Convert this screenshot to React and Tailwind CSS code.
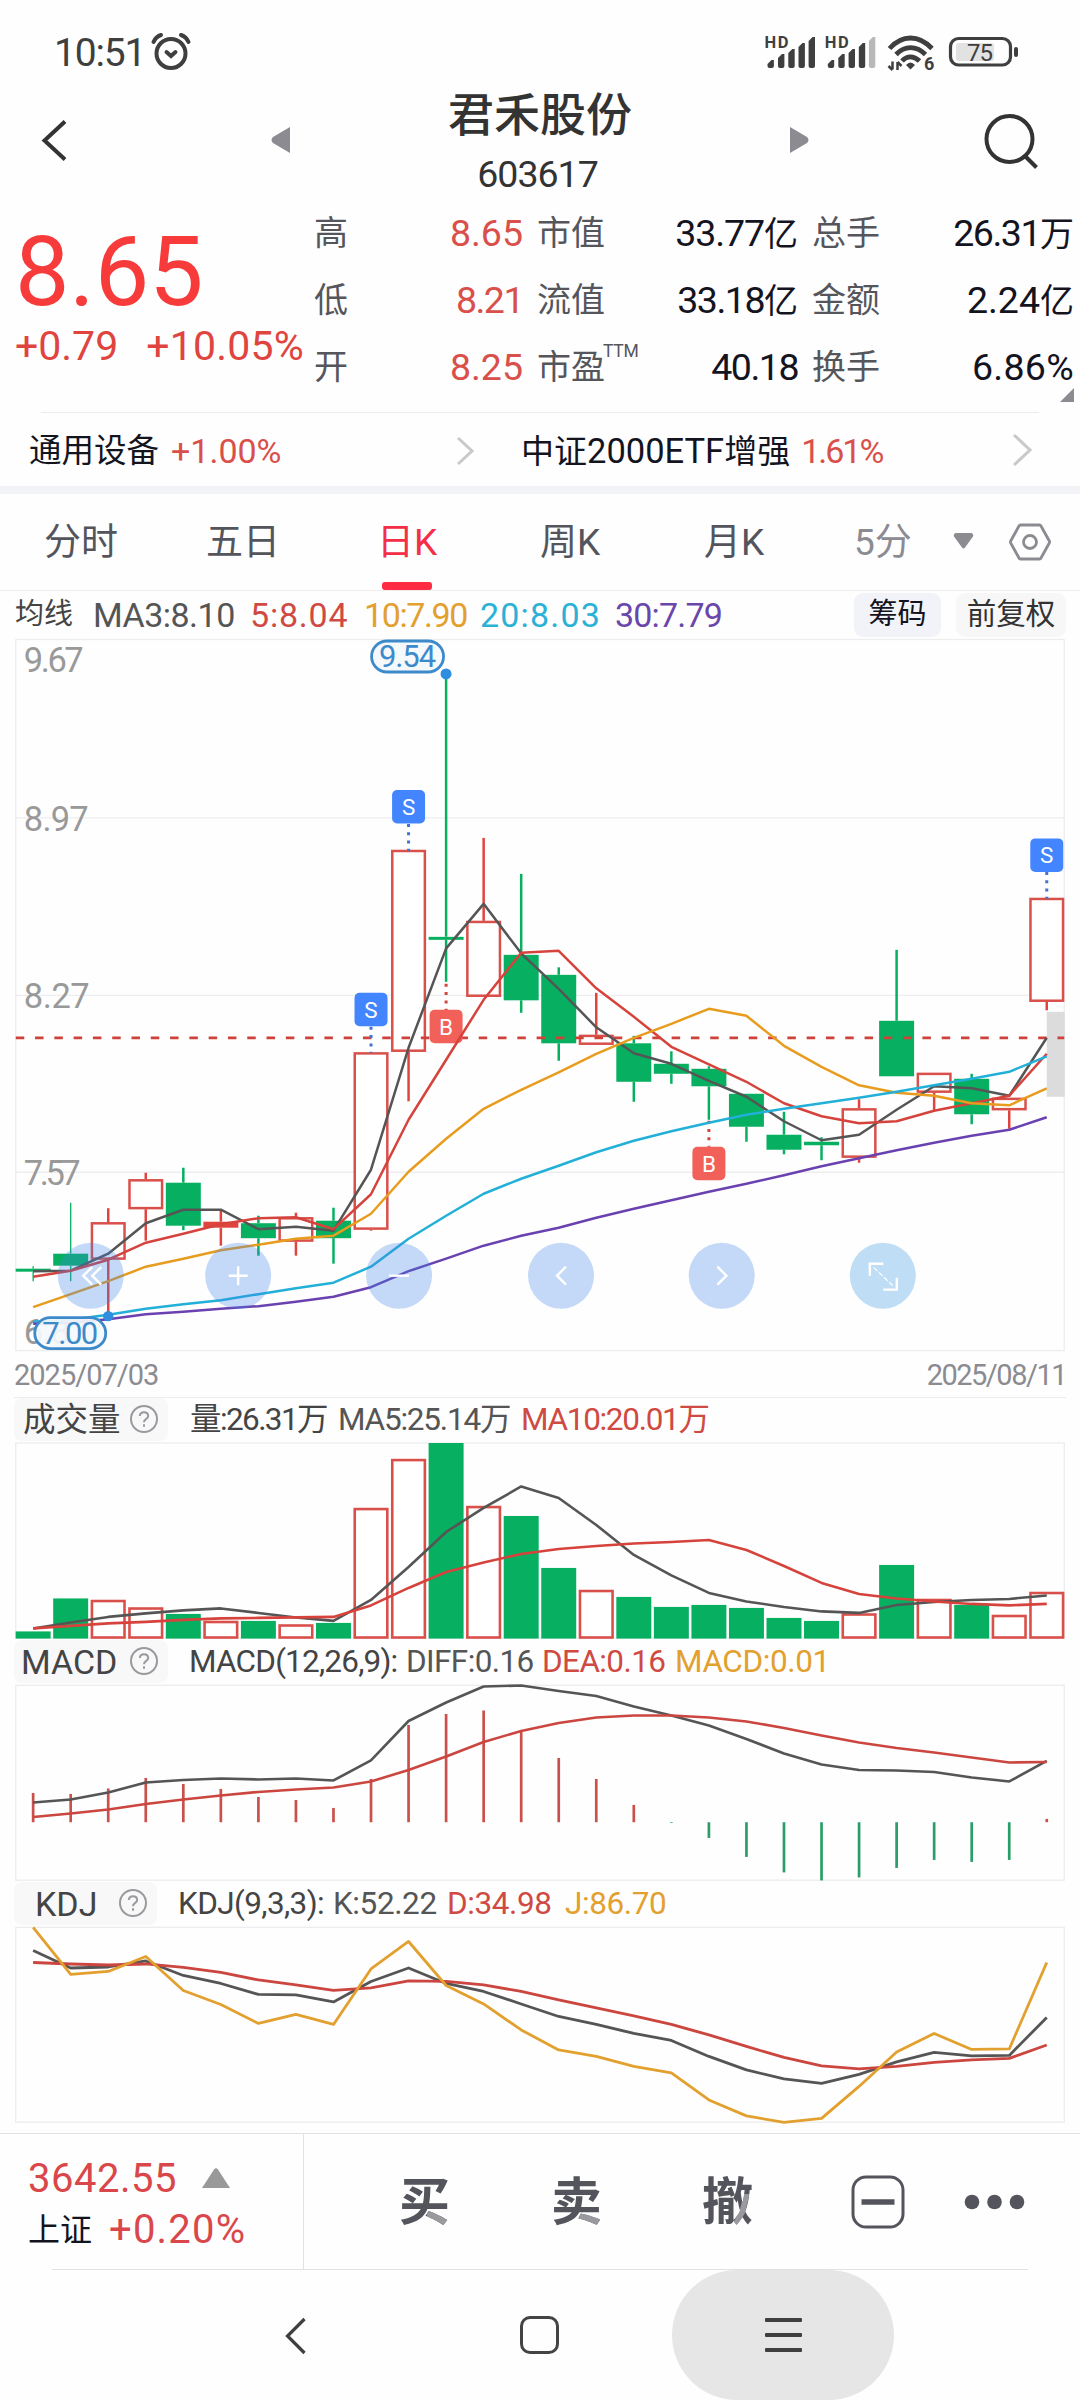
import React from "react";

const RED = "#e0443e";
const LINE_RED = "#d5433c";
const GREEN = "#07b061";
const GRAY = "#555555";
const ORANGE = "#e89c1e";
const CYAN = "#22b0d8";
const PURPLE = "#6a41b0";

const X0 = 32.9;
const STEP = 37.56;
const cx = (i) => X0 + i * STEP;
const toPoints = (ys) => ys.map((y, i) => `${cx(i).toFixed(1)},${y}`).join(" ");

// type, body top, body bottom, high, low
const candles = [
  ["g", 1269, 1272, 1266.5, 1281.5],
  ["g", 1254, 1266, 1203, 1281.5],
  ["r", 1222.5, 1260, 1208.5, 1315],
  ["r", 1179.5, 1209.5, 1173, 1241],
  ["g", 1183, 1226, 1168, 1230.5],
  ["f", 1222, 1228, 1211, 1246],
  ["g", 1223.5, 1238.5, 1216, 1256],
  ["r", 1217.5, 1242, 1213, 1256],
  ["g", 1221, 1238.5, 1208, 1264],
  ["r", 1052.5, 1230, 1052.5, 1231],
  ["r", 850, 1052, 850, 1101.5],
  ["g", 937, 940, 674, 982],
  ["r", 921, 997, 838, 997],
  ["g", 955, 1000.5, 874, 1013],
  ["g", 975, 1043.5, 967.5, 1061],
  ["r", 1035, 1045, 993, 1045],
  ["g", 1043.5, 1082, 1036, 1102],
  ["g", 1064, 1074, 1051.5, 1084],
  ["g", 1069, 1086.5, 1066.5, 1120],
  ["g", 1094, 1127, 1094, 1142],
  ["g", 1135, 1150, 1112, 1154.5],
  ["g", 1142, 1145.5, 1137.5, 1160.5],
  ["r", 1108.5, 1158, 1099.5, 1163],
  ["g", 1021, 1076.5, 950, 1076.5],
  ["r", 1073, 1093, 1073, 1111],
  ["g", 1079, 1114.5, 1074, 1124.5],
  ["r", 1098, 1110.5, 1098, 1129],
  ["r", 898, 1002, 898, 1010.5],
];

const ma3 = [1271.5, 1271, 1254, 1223.5, 1210, 1210, 1229.5, 1227, 1231, 1170, 1048, 948.5, 904, 953.5, 989, 1027.5, 1053.5, 1064, 1081, 1097, 1121.5, 1140.5, 1135, 1110, 1086.5, 1088.5, 1096, 1038];
const ma5 = [1277, 1271, 1260, 1243, 1234, 1224.5, 1218.5, 1217.5, 1229.5, 1194.5, 1120, 1060, 1000, 953, 951, 988.5, 1017, 1047, 1064.5, 1082, 1103.5, 1116.5, 1123.5, 1121.5, 1111, 1103.5, 1096, 1054];
const ma10 = [1307.5, 1294.5, 1281.5, 1267, 1259, 1250.5, 1245, 1239, 1236, 1214, 1172, 1139, 1109, 1090, 1072.5, 1054, 1038, 1024, 1009, 1016, 1046, 1067, 1085.5, 1093, 1096, 1103.5, 1105.5, 1088.5];
const ma20 = [1322, 1320, 1315, 1309, 1304.5, 1300.5, 1294.5, 1288.5, 1283, 1267, 1239, 1216, 1194, 1179, 1166, 1152.5, 1141, 1131.5, 1123, 1115, 1109, 1103.5, 1098, 1092, 1085.5, 1079, 1072, 1056.5];
const ma30 = [1324, 1323, 1319.5, 1314.5, 1312, 1309, 1306.5, 1302, 1297, 1287.5, 1271.5, 1259, 1246, 1236, 1228, 1218, 1209, 1200.5, 1192, 1184, 1175.5, 1166.5, 1158.5, 1150.5, 1143, 1136, 1130, 1117.5];

const volumes = [1631.5, 1598.5, 1600, 1607.5, 1614, 1621, 1621, 1624.5, 1623, 1508, 1459, 1443, 1506, 1516, 1568, 1590, 1597, 1607, 1605, 1608, 1618, 1621, 1613.5, 1565, 1599, 1605, 1615, 1592];
const vol5 = [1628.5, 1622.5, 1617, 1613.5, 1610.5, 1608.5, 1613, 1617.5, 1621, 1600, 1567, 1532, 1508, 1486.5, 1498, 1525, 1555, 1575.5, 1593, 1601.5, 1607, 1611.5, 1613, 1605, 1602, 1600, 1599, 1595.5];
const vol10 = [1628.5, 1626, 1623.5, 1622, 1620, 1618.5, 1618, 1617.5, 1617, 1605.5, 1588, 1572, 1562.5, 1554, 1549, 1546, 1543.5, 1542, 1540, 1550, 1566, 1583, 1594, 1598.5, 1601.5, 1604, 1605.5, 1604];

const macdBars = [1793, 1794, 1788.5, 1778, 1784, 1789, 1797, 1800, 1808, 1779, 1725, 1714, 1710.5, 1731, 1758, 1779, 1805, 1823, 1838, 1857, 1872.5, 1880.5, 1877.5, 1868, 1860, 1862, 1860, 1819];
const diff = [1802.5, 1799.5, 1792.5, 1782.5, 1780, 1778.5, 1779.5, 1778.5, 1780.5, 1760.5, 1721, 1702.5, 1686.5, 1685.5, 1691, 1696, 1706.5, 1715.5, 1725.5, 1739, 1753.5, 1764.5, 1770, 1770.5, 1772, 1777.5, 1781.5, 1761];
const dea = [1817, 1813.5, 1809.5, 1804, 1799.5, 1795.5, 1792, 1789.5, 1787.5, 1781.5, 1770, 1756.5, 1742, 1731, 1723, 1717.5, 1715.5, 1715.5, 1717.5, 1721.5, 1728, 1735.5, 1742.5, 1748, 1752.5, 1757.5, 1762.5, 1762];

const kLine = [1950.5, 1968, 1967, 1961, 1975.5, 1983.5, 1994.5, 1995, 2002, 1981.5, 1968, 1983.5, 1991.5, 2004, 2016.5, 2024.5, 2033.5, 2040.5, 2056.5, 2070, 2079, 2083.5, 2074.5, 2062, 2052.5, 2056, 2055.5, 2017.5];
const dLine = [1962.5, 1964, 1965, 1964, 1967.5, 1972.5, 1980, 1985, 1990.5, 1988, 1981, 1981.5, 1985, 1991.5, 2000, 2008, 2016, 2024.5, 2035, 2046.5, 2057.5, 2066, 2069, 2066.5, 2062.5, 2060, 2058.5, 2045];
const jLine = [1927.5, 1974.5, 1971.5, 1956.5, 1990.5, 2004.5, 2023.5, 2014.5, 2024.5, 1969, 1941.5, 1985.5, 2004, 2030, 2050, 2056.5, 2066.5, 2073, 2100, 2116, 2122.5, 2118.5, 2086.5, 2052, 2033.5, 2049.5, 2049, 1962.5];

function Line({ ys, color, w = 2.5 }) {
  return <polyline points={toPoints(ys)} fill="none" stroke={color} strokeWidth={w} strokeLinejoin="round" />;
}

function Candle({ i, type, top, bottom, high, low }) {
  const x = cx(i);
  const color = type === "g" ? GREEN : RED;
  const wick = i < 2 ? 1.3 : 2.5;
  return (
    <g>
      {high < top && <line x1={x} x2={x} y1={high} y2={top} stroke={color} strokeWidth={wick} />}
      {low > bottom && <line x1={x} x2={x} y1={bottom} y2={low} stroke={color} strokeWidth={wick} />}
      {type === "r" ? (
        <rect x={x - 16.3} y={top + 1.1} width={32.6} height={bottom - top - 2.2} fill="#fff" stroke="#d9504b" strokeWidth={2.5} />
      ) : (
        <rect x={x - 17.5} y={top} width={35} height={bottom - top} fill={color} />
      )}
    </g>
  );
}

function Marker({ i, y, label, color }) {
  const x = cx(i);
  return (
    <g>
      <rect x={x - 16.5} y={y} width={33} height={33.5} rx={5} fill={color} />
      <text x={x} y={y + 25} textAnchor="middle" fontSize={22.5} fill="#fff">{label}</text>
    </g>
  );
}

function PricePill({ x, y, w, label }) {
  return (
    <g>
      <rect x={x} y={y} width={w} height={31} rx={15.5} fill="#f5f9fc" fillOpacity={0.92} stroke="#3d8acb" strokeWidth={2.8} />
      <text x={x + w / 2} y={y + 26.5} textAnchor="middle" fontSize={31} textLength={w - 15} fill="#3d8acb">{label}</text>
    </g>
  );
}

const AXIS = [
  ["9.67", 672, 60],
  ["8.97", 831, 65],
  ["8.27", 1008, 66],
  ["7.57", 1185, 57],
  ["6.87", 1344, 65],
];

const BUTTONS = [
  [90.5, "#4084e8", "M92 1267.5l-9 8.5 9 9M101 1267.5l-9 8.5 9 9"],
  [238, "#4084e8", "M228.5 1276h19M238 1266.5v19"],
  [399, "#4084e8", "M389 1276h20"],
  [561, "#4084e8", "M566 1267l-9 9 9 9"],
  [721.8, "#4084e8", "M717.5 1267l9 9-9 9"],
  [883, "#3091e1", "M870 1276v-12h13.5M897 1278v12h-13.5"],
];

function MainChart() {
  return (
    <svg className="block h-[715px] w-full" viewBox="0 638 1080 715" fontFamily="Roboto, sans-serif">
      <g stroke="#ededef" strokeWidth={1.3} fill="none">
        <rect x={15.5} y={639.5} width={1049} height={711.5} />
        <path d="M15.5 818H1064.5M15.5 995.5H1064.5M15.5 1172.5H1064.5" />
      </g>
      {AXIS.map(([t, y, w]) => (
        <text key={t} x={23.5} y={y} fontSize={34.5} textLength={w} fill="#999999">{t}</text>
      ))}
      {candles.map(([type, top, bottom, high, low], i) => (
        <Candle key={i} i={i} type={type} top={top} bottom={bottom} high={high} low={low} />
      ))}
      <rect x={1047} y={1012} width={18} height={85} fill="#dcdcdc" />
      <line x1={15.5} x2={1064.5} y1={1038} y2={1038} stroke="#d0413a" strokeWidth={2.7} strokeDasharray="8.5 10.8" />
      <g strokeWidth={3} strokeDasharray="3 5.3" fill="none">
        <path stroke="#4273d0" d={`M${cx(9)} 1027V1053M${cx(10)} 824V851M${cx(27)} 872V899`} />
        <path stroke="#d5453e" d={`M${cx(11)} 984V1011M${cx(18)} 1121V1147`} />
      </g>
      <Marker i={9} y={993} label="S" color="#4285ff" />
      <Marker i={10} y={790} label="S" color="#4285ff" />
      <Marker i={27} y={838.5} label="S" color="#4285ff" />
      <Marker i={11} y={1010} label="B" color="#f2605a" />
      <Marker i={18} y={1147} label="B" color="#f2605a" />
      <Line ys={ma3} color={GRAY} />
      <Line ys={ma5} color={LINE_RED} />
      <Line ys={ma10} color={ORANGE} />
      <Line ys={ma20} color={CYAN} />
      <Line ys={ma30} color={PURPLE} />
      <PricePill x={371.5} y={641} w={72} label="9.54" />
      <circle cx={446} cy={674} r={5.5} fill="#2f8ee0" />
      <PricePill x={34.5} y={1318} w={71} label="7.00" />
      <circle cx={108} cy={1316.5} r={5.2} fill="#2f8ee0" />
      {BUTTONS.map(([x, color, d]) => (
        <g key={x}>
          <circle cx={x} cy={1276} r={33} fill={color} fillOpacity={0.3} />
          <path d={d} fill="none" stroke="#fff" strokeWidth={2.4} />
        </g>
      ))}
      <path d="M874 1268l19 18" stroke="#fff" strokeWidth={1.2} strokeDasharray="5 2" />
    </svg>
  );
}

function VolumeChart() {
  return (
    <svg className="block h-[199px] w-full" viewBox="0 1441 1080 199">
      <rect x={15.5} y={1443} width={1049} height={195} fill="none" stroke="#ededef" strokeWidth={1.3} />
      {volumes.map((y, i) =>
        candles[i][0] === "g" ? (
          <rect key={i} x={cx(i) - 17.5} y={y} width={35} height={1638.7 - y} fill={GREEN} />
        ) : (
          <rect key={i} x={cx(i) - 16.3} y={y + 1.1} width={32.6} height={1636.5 - y} fill="#fff" stroke="#d9504b" strokeWidth={2.6} />
        )
      )}
      <Line ys={vol5} color={GRAY} w={2.6} />
      <Line ys={vol10} color={LINE_RED} w={2.6} />
    </svg>
  );
}

function MacdChart() {
  return (
    <svg className="block h-[199px] w-full" viewBox="0 1683 1080 199">
      <rect x={15.5} y={1685.3} width={1049} height={195} fill="none" stroke="#ededef" strokeWidth={1.3} />
      {macdBars.map((y, i) => (
        <line key={i} x1={cx(i)} x2={cx(i)} y1={1822.3} y2={y} stroke={y > 1822 ? "#2a9d68" : "#c9504b"} strokeWidth={2.7} />
      ))}
      <Line ys={diff} color={GRAY} w={2.6} />
      <Line ys={dea} color="#cc4640" w={2.6} />
    </svg>
  );
}

function KdjChart() {
  return (
    <svg className="block h-[199px] w-full" viewBox="0 1925 1080 199">
      <rect x={15.5} y={1927.3} width={1049} height={195} fill="none" stroke="#ededef" strokeWidth={1.3} />
      <Line ys={kLine} color={GRAY} w={2.8} />
      <Line ys={dLine} color="#cc4640" w={2.8} />
      <Line ys={jLine} color="#e2a02e" w={2.8} />
    </svg>
  );
}

function StatusIcons() {
  const bars = [
    [767.5, 60],
    [778, 54],
    [788.3, 49],
    [798.5, 43],
    [808.6, 37],
  ];
  return (
    <svg className="h-[60px] w-[270px]" viewBox="755 22 270 60" fill="#3f3f3f" fontFamily="Roboto, sans-serif">
      {[0, 60.3].map((dx) => (
        <g key={dx}>
          <text x={764.5 + dx} y={48} fontSize={16.5} fontWeight={700} textLength={24}>HD</text>
          {bars.map(([x, y], i) => (
            <path key={i} fill={dx && i === 4 ? "#b8b8b8" : "#3f3f3f"} d={`M${x + dx} 66V${y + 4}L${x + dx + 4} ${y}h2.4V66q0 2-2 2h-2.4q-2 0-2-2z`} />
          ))}
        </g>
      ))}
      <g fill="none" stroke="#3f3f3f" strokeWidth={4.8}>
        <path d="M889.5 48.5q9.5-10.5 21-10.500t21.500 10.500" />
        <path d="M896 54.500q6.500-6.800 14.500-6.800t15 6.800" />
        <path d="M902 61q3.800-4.200 8.500-4.200t9 4.200" />
      </g>
      <path d="M906 65q4.500-5 9 0L910.500 69.500z" />
      <path d="M892.500 61.500v8M888.500 66l4 4M897.500 70v-8M897.500 62l4 4" fill="none" stroke="#3f3f3f" strokeWidth={2.5} />
      <text x={924} y={70} fontSize={18} fontWeight={700}>6</text>
      <rect x={956} y={43} width={38} height={18} rx={3} fill="#e2e2e2" />
      <rect x={950.500} y={38.500} width={60} height={26.500} rx={8} fill="none" stroke="#3f3f3f" strokeWidth={3.2} />
      <rect x={1014} y={47} width={4} height={10} rx={2} />
      <text x={980} y={61} fontSize={24} textAnchor="middle" textLength={26}>75</text>
    </svg>
  );
}

function StatusBar() {
  return (
    <div className="flex h-[90px] items-start pt-[22px]">
      <div className="flex h-[60px] flex-1 items-center pl-[54px]">
        <span className="mt-[2px] text-[39px] leading-none tracking-[-1.2px] text-[#3f3f3f]">10:51</span>
        <svg className="ml-[5px] h-[42px] w-[42px]" viewBox="0 0 42 42" fill="none" stroke="#3f3f3f" strokeWidth="4" strokeLinecap="round">
          <circle cx="21" cy="22.500" r="14.500" />
          <path d="M16.500 21l4.500 4 4.500-4" />
          <path d="M3.500 11Q5.500 6 11 4M38.500 11Q36.500 6 31 4" />
        </svg>
      </div>
      <StatusIcons />
      <div className="w-[55px]" />
    </div>
  );
}

function TitleBar() {
  return (
    <div className="flex h-[110px] items-center">
      <svg className="ml-[41px] mt-[-9px] h-[44px] w-[26px]" viewBox="0 0 26 44" fill="none" stroke="#333" strokeWidth="4">
        <path d="M24 3.500L3.500 22.500 24 41.500" />
      </svg>
      <svg className="ml-[204px] mt-[-9px] h-[26px] w-[19px]" viewBox="0 0 19 26" fill="#8b8b91">
        <path d="M19 0v26L2 16q-3-3 0-6z" />
      </svg>
      <div className="ml-[120px] flex h-full w-[260px] flex-col items-center">
        <div className="-mt-[4px] text-[46px] font-medium leading-[58px] text-[#333]">君禾股份</div>
        <div className="mt-[9px] pr-[5px] text-[37.5px] leading-[42px] tracking-[-1px] text-[#333]">603617</div>
      </div>
      <svg className="ml-[120px] mt-[-9px] h-[26px] w-[19px]" viewBox="0 0 19 26" fill="#8b8b91">
        <path d="M0 0v26l17-10q3-3 0-6z" />
      </svg>
      <svg className="ml-[175px] mt-[-6px] h-[56px] w-[56px]" viewBox="0 0 56 56" fill="none" stroke="#333" strokeWidth="4">
        <circle cx="25.500" cy="25" r="23" />
        <path d="M41 42l11.500 11.500" />
      </svg>
    </div>
  );
}

function Stat({ label, value, valueClass = "", sup }) {
  return (
    <div className="flex h-[67px] items-center justify-between">
      <span className="flex text-[34px] leading-none text-[#55565c]">
        {label}
        {sup && <span className="-ml-[2px] -mt-[7px] text-[17.5px] leading-none tracking-[-0.3px]">{sup}</span>}
      </span>
      <span className={`mt-px text-[37.5px] leading-none ${valueClass}`}>{value}</span>
    </div>
  );
}

function Unit({ n, u, spacing }) {
  return (
    <>
      <span className={spacing}>{n}</span>
      <span className="text-[34px]">{u}</span>
    </>
  );
}

function Quote() {
  return (
    <div className="flex h-[213px]">
      <div className="w-[314px] pl-[15px] text-[#f63b3a]">
        <div className="mt-[22px] text-[97px] leading-[100px] tracking-[-0.2px]">8.65</div>
        <div className="mt-0 flex gap-[28px] text-[41px] leading-[48px] text-[#e0443e]">
          <span>+0.79</span>
          <span className="tracking-[0.2px]">+10.05%</span>
        </div>
      </div>
      <div className="w-[209px]">
        <Stat label="高" value="8.65" valueClass="text-[#d9504b]" />
        <Stat label="低" value="8.21" valueClass="text-[#d9504b] tracking-[-1.5px]" />
        <Stat label="开" value="8.25" valueClass="text-[#d9504b]" />
      </div>
      <div className="ml-[14px] w-[261px]">
        <Stat label="市值" value={<Unit n="33.77" u="亿" spacing="tracking-[-1.1px]" />} valueClass="text-[#14141e]" />
        <Stat label="流值" value={<Unit n="33.18" u="亿" spacing="tracking-[-1.5px]" />} valueClass="text-[#14141e]" />
        <Stat label="市盈" sup="TTM" value="40.18" valueClass="text-[#14141e] tracking-[-1.5px]" />
      </div>
      <div className="ml-[14px] flex w-[262px] flex-col">
        <Stat label="总手" value={<Unit n="26.31" u="万" spacing="tracking-[-1.5px]" />} valueClass="text-[#14141e]" />
        <Stat label="金额" value={<Unit n="2.24" u="亿" spacing="" />} valueClass="text-[#14141e]" />
        <Stat label="换手" value="6.86%" valueClass="text-[#14141e] tracking-[0.3px]" />
        <svg className="-mt-[13px] h-[14px] w-[14px] self-end" viewBox="0 0 14 14" fill="#8b8b91">
          <path d="M14 0v14H0z" />
        </svg>
      </div>
    </div>
  );
}

function Sectors() {
  return (
    <div className="flex h-[73px] items-center pt-[2px]">
      <div className="flex w-[474px] items-center pl-[29px]">
        <span className="text-[32.5px] leading-none text-[#14141e]">通用设备</span>
        <span className="ml-[12px] text-[34px] leading-none text-[#d9504b]">+1.00%</span>
        <svg className="ml-auto h-[30px] w-[18px]" viewBox="0 0 18 30" fill="none" stroke="#c9c9cc" strokeWidth="3">
          <path d="M2 2l14 13L2 28" />
        </svg>
      </div>
      <div className="flex w-[558px] items-center pl-[47px]">
        <span className="text-[33px] leading-none text-[#14141e]">
          中证<span className="text-[34.5px]">2000ETF</span>增强
        </span>
        <span className="ml-[11px] text-[34px] leading-none tracking-[-2px] text-[#d9504b]">1.61%</span>
        <svg className="-mt-[2px] ml-auto h-[34px] w-[20px]" viewBox="0 0 20 34" fill="none" stroke="#c9c9cc" strokeWidth="3">
          <path d="M2 2l16 15L2 32" />
        </svg>
      </div>
    </div>
  );
}

function Tabs() {
  const tabs = [
    ["分时", "w-[162px]"],
    ["五日", "w-[162px]"],
    ["日K", "w-[166px]"],
    ["周K", "w-[160px]"],
    ["月K", "w-[168px]"],
  ];
  return (
    <div className="flex h-[97px] border-b-[1.5px] border-[#ededef] text-[37px] text-[#54555c]">
      {tabs.map(([t, w]) => (
        <div key={t} className={`flex flex-col items-center ${w} ${t === "日K" ? "text-[#f32f47]" : ""}`}>
          <span className="mt-[21px] leading-[56px]">{t}</span>
          {t === "日K" && <span className="mt-[11px] h-[8px] w-[50px] rounded-[3px] bg-[#ff2b42]" />}
        </div>
      ))}
      <span className="ml-[36px] mt-[21px] w-[62px] leading-[56px] text-[#8b8b91]">5分</span>
      <svg className="ml-[37px] mt-[38px] h-[17px] w-[21px]" viewBox="0 0 21 17" fill="#8b8b91">
        <path d="M2.500 1h16q2.500 1 1.500 3.500L12 15.500q-1.500 2-3 0L1 4.500Q0 2 2.500 1z" />
      </svg>
      <svg className="ml-[35px] mt-[29px] h-[38px] w-[42px]" viewBox="0 0 42 38" fill="none" stroke="#8b8b91" strokeWidth="2.800" strokeLinejoin="round">
        <path d="M11.500 2h19q1 0 1.500 1l8.300 15q.5 1 0 2L32 35q-.5 1-1.500 1h-19q-1 0-1.500-1L1.700 20q-.5-1 0-2L10 3q.5-1 1.500-1z" />
        <circle cx="21" cy="19" r="6.500" />
      </svg>
    </div>
  );
}

function Averages() {
  return (
    <div className="flex h-[47px] items-center whitespace-nowrap text-[34px] leading-none">
      <span className="w-[78px] pl-[15px] text-[29px] text-[#444]">均线</span>
      <span className="ml-[15px] w-[157px] tracking-[-0.5px] text-[#555]">MA3:8.10</span>
      <span className="w-[114px] tracking-[0.8px] text-[#cf4a42]">5:8.04</span>
      <span className="w-[116px] tracking-[-1.4px] text-[#e2a02e]">10:7.90</span>
      <span className="w-[135px] tracking-[1.2px] text-[#2bb1d6]">20:8.03</span>
      <span className="w-[239px] tracking-[-0.8px] text-[#6a46ab]">30:7.79</span>
      <span className="flex h-[44px] w-[87px] items-center justify-center rounded-[9px] bg-[#f2f3f8] text-[29px] text-[#14141e]">筹码</span>
      <span className="ml-[15px] flex h-[44px] w-[110px] items-center justify-center rounded-[9px] bg-[#f7f7f8] text-[29.5px] text-[#333]">前复权</span>
    </div>
  );
}

function Help() {
  return (
    <svg className="h-[30px] w-[30px]" viewBox="0 0 30 30" fill="none" stroke="#99999e" strokeWidth="2">
      <circle cx="15" cy="15" r="13" />
      <path d="M10.800 12q.3-3.700 4.200-3.700t4.200 3.500q0 2-2.200 3.400-2 1.300-2 3" />
      <path d="M15 20.300v2.400" />
    </svg>
  );
}

function PanelHeader({ title, width, titleClass, pad, children }) {
  return (
    <div className="flex h-[43px] items-center whitespace-nowrap pl-[14px] text-[31.5px] leading-[40px] text-[#444]">
      <div className={`flex h-[43px] items-center justify-between rounded-[8px] bg-[#f8f8f9] ${width} ${pad}`}>
        <span className={`mt-[2px] ${titleClass}`}>{title}</span>
        <Help />
      </div>
      <div className="mt-[2px] flex">{children}</div>
    </div>
  );
}

function TwoTone({ char, clip, className }) {
  return (
    <span className={`relative text-[51px] font-bold leading-none text-[#54555c] ${className}`}>
      {char}
      <span aria-hidden="true" className={`absolute left-0 top-0 text-[#9a9a9e] ${clip}`}>
        {char}
      </span>
    </span>
  );
}

function TradeBar() {
  return (
    <div className="flex h-[137px] border-t-[1.5px] border-[#e2e2e4]">
      <div className="w-[304px] border-r border-[#e2e2e4] pl-[28px]">
        <div className="mt-[22px] flex items-center text-[40px] leading-[46px] tracking-[0.5px] text-[#d9474a]">
          3642.55
          <svg className="-mt-[2px] ml-[25px] h-[20px] w-[28px]" viewBox="0 0 28 20" fill="#999">
            <path d="M12 1.500q2-2.500 4 0L28 20H0z" />
          </svg>
        </div>
        <div className="mt-[5px] flex items-center text-[40px] leading-[46px] text-[#d9474a]">
          <span className="text-[32px] text-[#14141e]">上证</span>
          <span className="ml-[17px] tracking-[1.2px]">+0.20%</span>
        </div>
      </div>
      <div className="flex flex-1 items-center pt-px pl-[95px]">
        <TwoTone char="买" clip="[clip-path:polygon(55%_68%,100%_68%,100%_100%,55%_100%)]" className="" />
        <TwoTone char="卖" clip="[clip-path:polygon(55%_72%,100%_72%,100%_100%,55%_100%)]" className="ml-[101px]" />
        <TwoTone char="撤" clip="[clip-path:polygon(82%_34%,93%_34%,84%_72%,66%_100%,56%_100%,74%_66%)]" className="ml-[100px]" />
        <svg className="ml-[98px] h-[54px] w-[54px]" viewBox="0 0 54 54" fill="none" stroke="#54555c">
          <rect x="2" y="2" width="50" height="50" rx="13" strokeWidth="3" />
          <path d="M10.500 27h33" strokeWidth="5.500" />
        </svg>
        <svg className="-mt-px ml-[59px] h-[16px] w-[62px]" viewBox="0 0 62 16" fill="#54555c">
          <circle cx="8" cy="8" r="7.300" />
          <circle cx="30.500" cy="8" r="7.300" />
          <circle cx="53" cy="8" r="7.300" />
        </svg>
      </div>
    </div>
  );
}

function NavBar() {
  return (
    <div className="flex h-[130px] items-center">
      <svg className="ml-[284px] mt-[1px] h-[38px] w-[24px]" viewBox="0 0 24 38" fill="none" stroke="#3f3f3f" strokeWidth="3.200">
        <path d="M20.500 2L3.500 19l17 17" />
      </svg>
      <div className="ml-[212px] h-[38px] w-[39px] rounded-[10px] border-[3.5px] border-[#444]" />
      <div className="ml-auto mr-[186px] flex h-[130px] w-[222px] flex-col items-center justify-center gap-[11px] rounded-[65px] bg-[#e6e6e6]">
        <span className="h-[4px] w-[37px] rounded-[1px] bg-[#3f3f3f]" />
        <span className="h-[4px] w-[37px] rounded-[1px] bg-[#3f3f3f]" />
        <span className="h-[4px] w-[37px] rounded-[1px] bg-[#3f3f3f]" />
      </div>
    </div>
  );
}

export default function App() {
  return (
    <div className="flex h-[2400px] w-[1080px] flex-col overflow-hidden bg-[#fefefe] font-[Roboto,'Noto_Sans_CJK_SC',sans-serif]">
      <StatusBar />
      <TitleBar />
      <Quote />
      <div className="mx-[41px] -mt-px h-[1.5px] bg-[#ebebed]" />
      <Sectors />
      <div className="h-[8px] bg-[#f2f3f7]" />
      <Tabs />
      <Averages />
      <MainChart />
      <div className="mx-[14px] flex h-[45px] items-center justify-between border-b-[1.5px] border-[#ededef] pt-[2px] text-[29px] tracking-[-1px] text-[#8b8b91]">
        <span>2025/07/03</span>
        <span className="tracking-[-1.5px]">2025/08/11</span>
      </div>
      <PanelHeader title="成交量" width="w-[154px]" pad="pl-[9px] pr-[9px]" titleClass="text-[32.5px]">
        <span className="ml-[22px] w-[148px] tracking-[-1.6px]">量:26.31万</span>
        <span className="w-[183px] tracking-[-1.2px] text-[#555]">MA5:25.14万</span>
        <span className="tracking-[-1.3px] text-[#cf4a42]">MA10:20.01万</span>
      </PanelHeader>
      <VolumeChart />
      <PanelHeader title="MACD" width="w-[154px]" pad="pl-[7px] pr-[9px]" titleClass="text-[34px]">
        <span className="ml-[21px] w-[217px] tracking-[-0.8px]">MACD(12,26,9):</span>
        <span className="w-[136px] tracking-[-0.6px] text-[#555]">DIFF:0.16</span>
        <span className="w-[133px] tracking-[-0.6px] text-[#cf4a42]">DEA:0.16</span>
        <span className="tracking-[-0.4px] text-[#e2a02e]">MACD:0.01</span>
      </PanelHeader>
      <MacdChart />
      <PanelHeader title="KDJ" width="w-[143px]" pad="pl-[21px] pr-[9px]" titleClass="text-[34px]">
        <span className="ml-[21px] w-[155px] tracking-[-0.6px]">KDJ(9,3,3):</span>
        <span className="w-[114px] tracking-[-0.4px] text-[#555]">K:52.22</span>
        <span className="w-[118px] tracking-[-0.4px] text-[#cf4a42]">D:34.98</span>
        <span className="tracking-[-0.4px] text-[#e2a02e]">J:86.70</span>
      </PanelHeader>
      <KdjChart />
      <div className="h-[9px]" />
      <TradeBar />
      <div className="mx-[52px] -mt-px h-[1.5px] shrink-0 bg-[#e2e2e4]" />
      <NavBar />
    </div>
  );
}
